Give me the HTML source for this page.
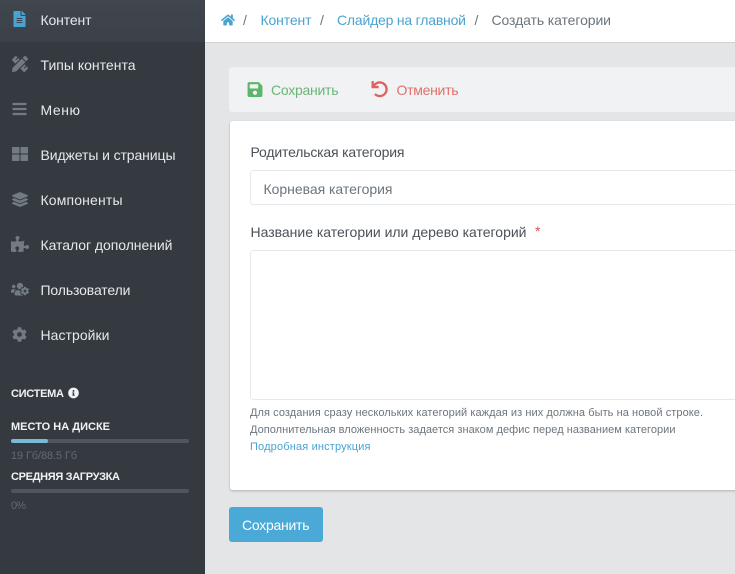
<!DOCTYPE html>
<html lang="ru">
<head>
<meta charset="utf-8">
<title>Создать категории</title>
<style>
html,body{margin:0;padding:0;width:735px;height:574px;overflow:hidden;background:#e3e5e7}
svg{display:block}
text{font-family:"Liberation Sans","Noto Sans CJK SC",sans-serif;white-space:pre}
.n{font-size:14px;fill:#e6e9ec}
.i{fill:#727a82}
.b{font-size:11px;font-weight:bold;fill:#f1f3f5}
.m{font-size:11px;fill:#626a72}
.c{font-size:14px;fill:#4aa3cf}
.d{font-size:14px;fill:#6c757d}
.l{font-size:14px;fill:#4a5158}
.h{font-size:11px;fill:#6c757d}
</style>
</head>
<body>
<svg xmlns="http://www.w3.org/2000/svg" width="735" height="574" viewBox="0 0 735 574">
<defs>
<linearGradient id="a" x1="0" y1="0" x2="0" y2="1"><stop offset="0" stop-color="#40464d"/><stop offset="1" stop-color="#3b4148"/></linearGradient>
<filter id="s" x="-5%" y="-5%" width="110%" height="110%"><feDropShadow dx="0" dy="1" stdDeviation="1.2" flood-color="#000" flood-opacity=".22"/></filter>
</defs>
<rect width="735" height="574" fill="#e3e5e7"/>

<!-- sidebar -->
<rect width="205" height="574" fill="#343a40"/>
<rect width="205" height="42" fill="url(#a)"/>

<svg x="13.5" y="11" width="12" height="16" viewBox="0 0 384 512"><path fill="#4aa3d6" d="M224 136V0H24C10.7 0 0 10.7 0 24v464c0 13.3 10.7 24 24 24h336c13.3 0 24-10.7 24-24V160H248c-13.2 0-24-10.8-24-24zm64 236c0 6.6-5.4 12-12 12H108c-6.6 0-12-5.4-12-12v-8c0-6.6 5.4-12 12-12h168c6.6 0 12 5.4 12 12v8zm0-64c0 6.6-5.4 12-12 12H108c-6.6 0-12-5.4-12-12v-8c0-6.6 5.4-12 12-12h168c6.6 0 12 5.4 12 12v8zm0-72v8c0 6.6-5.4 12-12 12H108c-6.6 0-12-5.4-12-12v-8c0-6.6 5.4-12 12-12h168c6.6 0 12 5.4 12 12zm96-114.1v6.1H256V0h6.1c6.4 0 12.5 2.5 17 7l97.9 98c4.5 4.5 7 10.6 7 16.9z"/></svg>
<text class="n" x="40.5" y="25" textLength="51">Контент</text>

<svg class="i" x="12" y="56" width="16" height="16" viewBox="0 0 512 512"><path d="M109.46 244.04l134.58-134.56-44.12-44.12-61.68 61.68a7.919 7.919 0 0 1-11.21 0l-11.21-11.21c-3.1-3.1-3.1-8.12 0-11.21l61.68-61.68-33.64-33.65C131.47-3.1 111.39-3.1 99 9.29L9.29 99c-12.38 12.39-12.39 32.47 0 44.86l100.17 100.18zm388.47-116.8c18.76-18.76 18.75-49.17 0-67.93l-45.25-45.25c-18.76-18.76-49.18-18.76-67.95 0l-46.02 46.01 113.2 113.2 46.02-46.03zM316.08 82.71l-297 296.96L.32 487.11c-2.53 14.49 10.09 27.11 24.59 24.56l107.45-18.84L429.28 195.9 316.08 82.71zm186.63 285.43l-33.64-33.64-61.68 61.68c-3.1 3.1-8.12 3.1-11.21 0l-11.21-11.21c-3.09-3.1-3.09-8.12 0-11.21l61.68-61.68-44.14-44.14L267.93 402.5l100.21 100.2c12.39 12.39 32.47 12.39 44.86 0l89.71-89.7c12.39-12.39 12.39-32.47 0-44.86z"/></svg>
<text class="n" x="40.5" y="70" textLength="95">Типы контента</text>

<svg class="i" x="12.5" y="101" width="14" height="16" viewBox="0 0 448 512"><path d="M16 132h416c8.837 0 16-7.163 16-16V76c0-8.837-7.163-16-16-16H16C7.163 60 0 67.163 0 76v40c0 8.837 7.163 16 16 16zm0 160h416c8.837 0 16-7.163 16-16v-40c0-8.837-7.163-16-16-16H16c-8.837 0-16 7.163-16 16v40c0 8.837 7.163 16 16 16zm0 160h416c8.837 0 16-7.163 16-16v-40c0-8.837-7.163-16-16-16H16c-8.837 0-16 7.163-16 16v40c0 8.837 7.163 16 16 16z"/></svg>
<text class="n" x="40.5" y="115" textLength="39.5">Меню</text>

<svg class="i" x="12" y="146" width="16" height="16" viewBox="0 0 512 512"><path d="M296 32h192c13.255 0 24 10.745 24 24v160c0 13.255-10.745 24-24 24H296c-13.255 0-24-10.745-24-24V56c0-13.255 10.745-24 24-24zm-80 0H24C10.745 32 0 42.745 0 56v160c0 13.255 10.745 24 24 24h192c13.255 0 24-10.745 24-24V56c0-13.255-10.745-24-24-24zM0 296v160c0 13.255 10.745 24 24 24h192c13.255 0 24-10.745 24-24V296c0-13.255-10.745-24-24-24H24c-13.255 0-24 10.745-24 24zm296 184h192c13.255 0 24-10.745 24-24V296c0-13.255-10.745-24-24-24H296c-13.255 0-24 10.745-24 24v160c0 13.255 10.745 24 24 24z"/></svg>
<text class="n" x="40.5" y="160" textLength="135">Виджеты и страницы</text>

<svg class="i" x="12" y="192" width="16" height="15" viewBox="0 0 512 512" preserveAspectRatio="none"><path d="M12.41 148.02l232.94 105.67c6.8 3.09 14.49 3.09 21.29 0l232.94-105.67c16.55-7.51 16.55-32.52 0-40.03L266.65 2.31a25.607 25.607 0 0 0-21.29 0L12.41 107.98c-16.55 7.51-16.55 32.53 0 40.04zm487.18 88.28l-58.09-26.33-161.64 73.27c-7.56 3.43-15.59 5.17-23.86 5.17s-16.29-1.74-23.86-5.17L70.51 209.97l-58.1 26.33c-16.55 7.5-16.55 32.5 0 40l232.94 105.59c6.8 3.08 14.49 3.08 21.29 0L499.59 276.3c16.55-7.5 16.55-32.5 0-40zm0 127.8l-57.87-26.23-161.86 73.37c-7.56 3.43-15.59 5.17-23.86 5.17s-16.29-1.74-23.86-5.17L70.29 337.87 12.41 364.1c-16.55 7.5-16.55 32.5 0 40l232.94 105.59c6.8 3.08 14.49 3.08 21.29 0L499.59 404.1c16.55-7.5 16.55-32.5 0-40z"/></svg>
<text class="n" x="40.5" y="205" textLength="82">Компоненты</text>

<svg class="i" x="11" y="236" width="18" height="16" viewBox="0 0 576 512"><path d="M519.442 288.651c-41.519 0-59.5 31.593-82.058 31.593C377.409 320.244 432 144 432 144s-196.288 80-196.288-3.297c0-35.827 36.288-46.25 36.288-85.985C272 19.216 243.885 0 210.539 0c-34.654 0-66.366 18.891-66.366 56.346 0 41.364 31.711 59.277 31.711 81.75C175.885 207.719 0 166.758 0 166.758v333.237s178.635 41.047 178.635-28.662c0-22.473-40-40.107-40-81.471 0-37.456 29.25-56.346 63.577-56.346 33.673 0 61.788 19.216 61.788 54.717 0 39.735-36.288 50.158-36.288 85.985 0 60.803 129.675 25.73 181.23 25.73 0 0-34.725-120.101 25.827-120.101 35.962 0 46.423 36.152 86.308 36.152C556.712 416 576 387.99 576 354.443c0-34.199-18.962-65.792-56.558-65.792z"/></svg>
<text class="n" x="40.5" y="250" textLength="132">Каталог дополнений</text>

<svg class="i" x="11" y="282" width="18" height="14.4" viewBox="0 0 640 512"><path d="M610.5 341.3c2.6-14.1 2.6-28.5 0-42.6l25.8-14.9c3-1.7 4.3-5.2 3.3-8.5-6.7-21.6-18.2-41.2-33.2-57.4-2.3-2.5-6-3.1-9-1.4l-25.8 14.9c-10.9-9.3-23.4-16.5-36.9-21.3v-29.8c0-3.4-2.4-6.4-5.7-7.1-22.3-5-45-4.8-66.2 0-3.3.7-5.7 3.7-5.7 7.1v29.8c-13.5 4.8-26 12-36.9 21.3l-25.8-14.9c-2.9-1.7-6.7-1.1-9 1.4-15 16.2-26.5 35.8-33.2 57.4-1 3.3.4 6.8 3.3 8.5l25.8 14.9c-2.6 14.1-2.6 28.5 0 42.6l-25.8 14.9c-3 1.7-4.3 5.2-3.3 8.5 6.7 21.6 18.2 41.1 33.2 57.4 2.3 2.5 6 3.1 9 1.4l25.8-14.9c10.9 9.3 23.4 16.5 36.9 21.3v29.8c0 3.4 2.4 6.4 5.7 7.1 22.3 5 45 4.8 66.2 0 3.3-.7 5.7-3.7 5.7-7.1v-29.8c13.5-4.8 26-12 36.9-21.3l25.8 14.9c2.9 1.7 6.7 1.1 9-1.4 15-16.2 26.5-35.8 33.2-57.4 1-3.3-.4-6.8-3.3-8.5l-25.8-14.9zM496 368.5c-26.8 0-48.5-21.8-48.5-48.5s21.8-48.5 48.5-48.5 48.5 21.8 48.5 48.5-21.7 48.5-48.5 48.5zM96 224c35.3 0 64-28.7 64-64s-28.7-64-64-64-64 28.7-64 64 28.7 64 64 64zm224 32c1.9 0 3.7-.5 5.6-.6 8.3-21.7 20.5-42.1 36.3-59.2 7.4-8 17.9-12.6 28.9-12.6 6.9 0 13.7 1.8 19.6 5.3l7.9 4.6c.8-.5 1.6-.9 2.4-1.4 7-14.6 11.2-30.8 11.2-48 0-61.9-50.1-112-112-112S208 82.1 208 144c0 61.9 50.1 112 112 112zm105.2 194.5c-2.3-1.2-4.6-2.6-6.8-3.9-8.2 4.8-15.3 9.8-27.5 9.8-10.9 0-21.4-4.6-28.9-12.6-18.3-19.8-32.3-43.9-40.2-69.6-10.7-34.5 24.9-49.7 25.8-50.3-.1-2.6-.1-5.2 0-7.8l-7.9-4.6c-3.8-2.2-7-5-9.8-8.1-3.3.2-6.5.6-9.8.6-24.6 0-47.6-6-68.5-16h-8.3C179.6 288 128 339.6 128 403.2V432c0 26.5 21.5 48 48 48h255.4c-3.7-6-6.2-12.8-6.2-20.3v-9.2zM173.1 274.6C161.5 263.1 145.6 256 128 256H64c-35.3 0-64 28.7-64 64v32c0 17.7 14.3 32 32 32h65.9c6.3-47.4 34.9-87.3 75.2-109.4z"/></svg>
<text class="n" x="40.5" y="295" textLength="90">Пользователи</text>

<svg class="i" x="12" y="327" width="15" height="15" viewBox="0 0 512 512"><path d="M487.4 315.7l-42.6-24.6c4.3-23.2 4.3-47 0-70.2l42.6-24.6c4.9-2.8 7.1-8.6 5.5-14-11.1-35.6-30-67.8-54.7-94.6-3.8-4.1-10-5.1-14.8-2.3L380.8 110c-17.9-15.4-38.5-27.3-60.8-35.1V25.8c0-5.6-3.9-10.5-9.4-11.7-36.7-8.2-74.3-7.8-109.2 0-5.5 1.2-9.4 6.1-9.4 11.7V75c-22.2 7.9-42.8 19.8-60.8 35.1L88.7 85.5c-4.9-2.8-11-1.9-14.8 2.3-24.7 26.7-43.6 58.9-54.7 94.6-1.7 5.4.6 11.2 5.5 14L67.3 221c-4.3 23.2-4.3 47 0 70.2l-42.6 24.6c-4.9 2.8-7.1 8.6-5.5 14 11.1 35.6 30 67.8 54.7 94.6 3.8 4.1 10 5.1 14.8 2.3l42.6-24.6c17.9 15.4 38.5 27.3 60.8 35.1v49.2c0 5.6 3.9 10.5 9.4 11.7 36.7 8.2 74.3 7.8 109.2 0 5.5-1.2 9.4-6.1 9.4-11.7v-49.2c22.2-7.9 42.8-19.8 60.8-35.1l42.6 24.6c4.9 2.8 11 1.9 14.8-2.3 24.7-26.7 43.6-58.9 54.7-94.6 1.5-5.5-.7-11.3-5.6-14.1zM256 336c-44.1 0-80-35.9-80-80s35.9-80 80-80 80 35.9 80 80-35.9 80-80 80z"/></svg>
<text class="n" x="40.5" y="340" textLength="69">Настройки</text>

<text class="b" x="11" y="397" textLength="53">СИСТЕМА</text>
<svg x="68" y="387.5" width="11" height="11" viewBox="0 0 512 512"><path fill="#f1f3f5" d="M256 8C119.043 8 8 119.083 8 256c0 136.997 111.043 248 248 248s248-111.003 248-248C504 119.083 392.957 8 256 8zm0 110c23.196 0 42 18.804 42 42s-18.804 42-42 42-42-18.804-42-42 18.804-42 42-42zm56 254c0 6.627-5.373 12-12 12h-88c-6.627 0-12-5.373-12-12v-24c0-6.627 5.373-12 12-12h12v-64h-12c-6.627 0-12-5.373-12-12v-24c0-6.627 5.373-12 12-12h64c6.627 0 12 5.373 12 12v100h12c6.627 0 12 5.373 12 12v24z"/></svg>
<text class="b" x="11" y="430" textLength="99">МЕСТО НА ДИСКЕ</text>
<rect x="11" y="439" width="178" height="4" rx="2" fill="#4f565e"/>
<rect x="11" y="439" width="37" height="4" rx="2" fill="#7ab9d8"/>
<text class="m" x="11" y="459" textLength="66">19 Гб/88.5 Гб</text>
<text class="b" x="11" y="480" textLength="109">СРЕДНЯЯ ЗАГРУЗКА</text>
<rect x="11" y="489" width="178" height="4" rx="2" fill="#4f565e"/>
<text class="m" x="11" y="509" textLength="15">0%</text>

<!-- breadcrumb -->
<rect x="205" y="0" width="530" height="42" fill="#fff"/>
<rect x="205" y="42" width="530" height="1" fill="#cfd1d3"/>
<svg x="221" y="13" width="14" height="14" viewBox="0 0 576 512"><path fill="#4aa3cf" d="M280.37 148.26L96 300.11V464a16 16 0 0 0 16 16l112.06-.29a16 16 0 0 0 15.92-16V368a16 16 0 0 1 16-16h64a16 16 0 0 1 16 16v95.64a16 16 0 0 0 16 16.05L464 480a16 16 0 0 0 16-16V300L295.67 148.26a12.19 12.19 0 0 0-15.3 0zM571.6 251.47L488 182.56V44.05a12 12 0 0 0-12-12h-56a12 12 0 0 0-12 12v72.61L318.47 43a48 48 0 0 0-61 0L4.34 251.47a12 12 0 0 0-1.6 16.9l25.5 31A12 12 0 0 0 45.15 301l235.22-193.74a12.19 12.19 0 0 1 15.3 0L530.9 301a12 12 0 0 0 16.9-1.6l25.5-31a12 12 0 0 0-1.7-16.93z"/></svg>
<text class="d" x="243" y="25">/</text>
<text class="c" x="260.5" y="25" textLength="51">Контент</text>
<text class="d" x="320" y="25">/</text>
<text class="c" x="337" y="25" textLength="129">Слайдер на главной</text>
<text class="d" x="474.5" y="25">/</text>
<text class="d" x="491.5" y="25" textLength="119.5">Создать категории</text>

<!-- toolbar -->
<rect x="229" y="67" width="520" height="45" rx="3" fill="#f0f2f3"/>
<svg x="247.5" y="81" width="15" height="17" viewBox="0 0 448 512"><path fill="#5cb56b" d="M433.941 129.941l-83.882-83.882A48 48 0 0 0 316.118 32H48C21.49 32 0 53.49 0 80v352c0 26.51 21.49 48 48 48h352c26.51 0 48-21.49 48-48V163.882a48 48 0 0 0-14.059-33.941zM224 416c-35.346 0-64-28.654-64-64 0-35.346 28.654-64 64-64s64 28.654 64 64c0 35.346-28.654 64-64 64zm96-304.52V212c0 6.627-5.373 12-12 12H76c-6.627 0-12-5.373-12-12V108c0-6.627 5.373-12 12-12h228.52c3.183 0 6.235 1.264 8.485 3.515l3.48 3.48A11.996 11.996 0 0 1 320 111.48z"/></svg>
<text x="271" y="95" textLength="67.5" style="font-size:14px;fill:#6cb577">Сохранить</text>
<svg x="371.5" y="81" width="16.5" height="16.5" viewBox="0 0 512 512"><path fill="#e0605c" d="M212.333 224.333H12c-6.627 0-12-5.373-12-12V12C0 5.373 5.373 0 12 0h48c6.627 0 12 5.373 12 12v78.112C117.773 39.279 184.26 7.47 258.175 8.007c136.906.994 246.448 111.623 246.157 248.532C504.041 393.258 393.12 504 256.333 504c-64.089 0-122.496-24.313-166.51-64.215-5.099-4.622-5.334-12.554-.467-17.42l33.967-33.967c4.474-4.474 11.662-4.717 16.401-.525C170.76 415.336 211.58 432 256.333 432c97.268 0 176-78.716 176-176 0-97.267-78.716-176-176-176-58.496 0-110.28 28.476-142.274 72.333h98.274c6.627 0 12 5.373 12 12v48c0 6.627-5.373 12-12 12z"/></svg>
<text x="396.5" y="95" textLength="62" style="font-size:14px;fill:#e0706c">Отменить</text>

<!-- card -->
<rect x="230" y="121" width="520" height="369" rx="3" fill="#fff" filter="url(#s)"/>
<text class="l" x="250.5" y="157" textLength="154">Родительская категория</text>
<rect x="250.5" y="170.5" width="500" height="34" rx="3" fill="#fff" stroke="#e6e9ec"/>
<text class="d" x="263.5" y="194" textLength="129">Корневая категория</text>
<text class="l" x="250.5" y="237" textLength="276">Название категории или дерево категорий</text>
<text x="535" y="236" style="font-size:14px;fill:#d9534f">*</text>
<rect x="250.5" y="250.5" width="500" height="149" rx="3" fill="#fff" stroke="#e6e9ec"/>
<text class="h" x="250" y="416" textLength="453">Для создания сразу нескольких категорий каждая из них должна быть на новой строке.</text>
<text class="h" x="250" y="433" textLength="425.5">Дополнительная вложенность задается знаком дефис перед названием категории</text>
<text x="250" y="450" textLength="120.5" style="font-size:11px;fill:#4aa3cf">Подробная инструкция</text>

<!-- button -->
<rect x="229" y="507" width="94" height="35" rx="3" fill="#4aa9d6"/>
<text x="242" y="530" textLength="67.5" style="font-size:14px;fill:#fff">Сохранить</text>
</svg>
</body>
</html>
